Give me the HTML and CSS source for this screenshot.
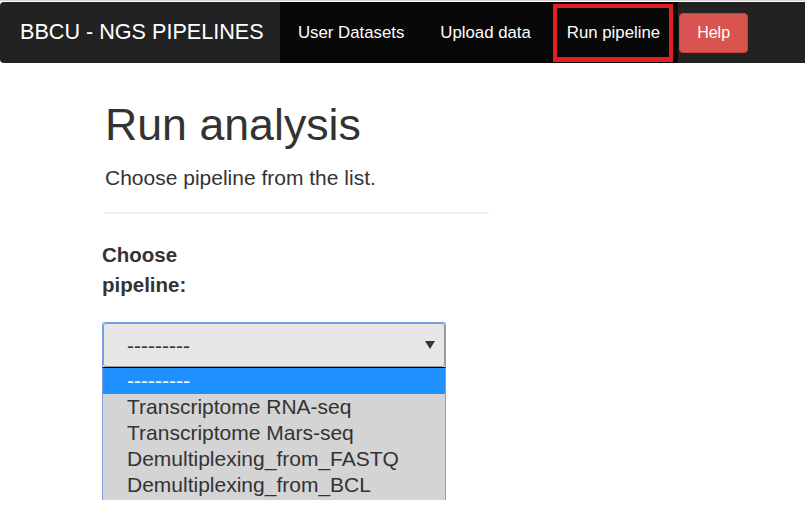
FILE: index.html
```html
<!DOCTYPE html>
<html>
<head>
<meta charset="utf-8">
<link rel="stylesheet" href="styles.css">
</head>
<body>
<nav class="navbar">
  <a class="brand">BBCU - NGS PIPELINES</a>
  <ul class="nav">
    <li><a class="nav-link">User Datasets</a></li>
    <li><a class="nav-link">Upload data</a></li>
    <li><a class="nav-link marked">Run pipeline</a></li>
  </ul>
  <a class="btn-help">Help</a>
</nav>
<main class="page">
  <header class="page-header">
    <h1 class="title">Run analysis</h1>
    <p class="lead">Choose pipeline from the list.</p>
    <hr class="rule">
  </header>
  <form class="form">
    <label class="label">Choose pipeline:</label>
    <div class="select">
      <div class="select-inner">
        <span class="select-value">---------</span>
        <span class="caret"></span>
      </div>
    </div>
    <ul class="listbox">
      <li class="option selected">---------</li>
      <li class="option">Transcriptome RNA-seq</li>
      <li class="option">Transcriptome Mars-seq</li>
      <li class="option">Demultiplexing_from_FASTQ</li>
      <li class="option">Demultiplexing_from_BCL</li>
    </ul>
  </form>
</main>
</body>
</html>
```

FILE: styles.css
```css
html, body {
  margin: 0;
  padding: 0;
  background: #fff;
}
body {
  border-top: 1px solid #d2d2d2;
  font-family: "Liberation Sans", Arial, sans-serif;
  color: #333;
}
.navbar {
  margin-top: 1px;
  height: 61px;
  display: flex;
  align-items: stretch;
  background: #222;
  border-radius: 4px 0 0 4px;
}
.brand {
  display: flex;
  align-items: center;
  width: 280px;
  box-sizing: border-box;
  padding-left: 20px;
  padding-bottom: 1px;
  font-size: 21.6px;
  line-height: 24px;
  color: #fff;
}
.nav {
  display: flex;
  margin: 0;
  padding: 0;
  list-style: none;
  background: #080808;
}
.nav li {
  display: flex;
}
.nav-link {
  display: flex;
  align-items: center;
  padding: 0 18px;
  font-size: 16.8px;
  line-height: 20px;
  color: #fff;
  position: relative;
}
.marked::after {
  content: "";
  position: absolute;
  left: 4px;
  top: 2px;
  width: 120px;
  height: 58px;
  box-sizing: border-box;
  border: 4px solid #e41e26;
  border-bottom-width: 5px;
}
.btn-help {
  align-self: center;
  margin-left: 1px;
  height: 40px;
  display: flex;
  align-items: center;
  padding: 0 17px;
  background: #d9534f;
  border: 1px solid #d43f3a;
  box-sizing: border-box;
  border-radius: 4px;
  color: #fff;
  font-size: 16px;
}
.page-header {
  width: 384px;
  padding-left: 105px;
}
.title {
  margin: 37px 0 0 0;
  font-size: 44.7px;
  line-height: 50px;
  font-weight: 400;
  color: #333;
}
.lead {
  margin: 13px 0 0;
  font-size: 21px;
  line-height: 30px;
}
.rule {
  margin: 19px 0 0;
  border: 0;
  border-top: 2px solid #eee;
  height: 0;
}
.form {
  padding-left: 102px;
  margin: 0;
}
.label {
  display: block;
  width: 120px;
  margin-top: 26px;
  font-size: 20.5px;
  line-height: 30px;
  font-weight: 700;
}
.select {
  margin-top: 22px;
  width: 344px;
  height: 45px;
  box-sizing: border-box;
  border: 1px solid #72a2e4;
  border-bottom: 0;
  border-radius: 3px 3px 0 0;
  background: #fff;
}
.select-inner {
  height: 44px;
  box-sizing: border-box;
  border: 1px solid #999;
  border-radius: 3px;
  background: #e6e6e6;
  display: flex;
  align-items: center;
  justify-content: space-between;
  padding: 0 9px 0 23px;
}
.select-value {
  font-size: 21px;
  line-height: 26px;
  color: #333;
  padding-top: 2px;
}
.caret {
  width: 0;
  height: 0;
  border-left: 5px solid transparent;
  border-right: 5px solid transparent;
  border-top: 8px solid #333;
}
.listbox {
  margin: 0;
  padding: 0 0 2px;
  list-style: none;
  width: 344px;
  box-sizing: border-box;
  border-top: 1px solid #000;
  border-left: 1px solid #7da2e0;
  border-right: 1px solid #7da2e0;
  background: #d4d4d4;
}
.option {
  height: 26px;
  padding-left: 24px;
  font-size: 21px;
  line-height: 26px;
  color: #333;
}
.option.selected {
  background: #1e90ff;
  color: #fff;
}
```
